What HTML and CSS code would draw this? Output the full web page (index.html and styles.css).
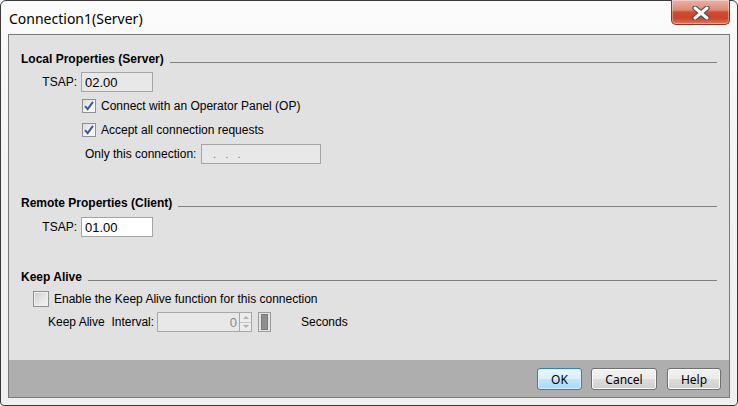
FILE: index.html
```html
<!DOCTYPE html>
<html>
<head>
<meta charset="utf-8">
<link rel="stylesheet" href="styles.css">
</head>
<body>
<div class="window">
  <div class="titlebar">
    <span class="title">Connection1(Server)</span>
    <button class="close" aria-label="Close">
      <svg width="20" height="14" viewBox="0 0 20 14">
        <path d="M4 2 L16 12 M16 2 L4 12" stroke="#4a4a4a" stroke-width="5.2" stroke-linecap="round" fill="none"/>
        <path d="M4 2 L16 12 M16 2 L4 12" stroke="#ffffff" stroke-width="3" stroke-linecap="round" fill="none"/>
      </svg>
    </button>
  </div>
  <div class="panel">
    <div class="content">
      <div class="sechead h1"><span class="sectitle">Local Properties (Server)</span><span class="rule"></span></div>
      <div class="row tsap r1"><span class="lbl">TSAP:</span><span class="field gray w72">02.00</span></div>
      <div class="row cbrow c1"><span class="cb"><svg width="14" height="14" viewBox="0 0 14 14"><path d="M3 7.2 L5.6 10.2 L11 2.8" stroke="#3c5aa0" stroke-width="2" fill="none"/></svg></span><span>Connect with an Operator Panel (OP)</span></div>
      <div class="row cbrow c2"><span class="cb"><svg width="14" height="14" viewBox="0 0 14 14"><path d="M3 7.2 L5.6 10.2 L11 2.8" stroke="#3c5aa0" stroke-width="2" fill="none"/></svg></span><span>Accept all connection requests</span></div>
      <div class="row only"><span class="onlylbl">Only this connection:</span><span class="field gray w120 dots">.&nbsp;&nbsp;&nbsp;.&nbsp;&nbsp;&nbsp;.</span></div>
      <div class="sechead h2"><span class="sectitle">Remote Properties (Client)</span><span class="rule"></span></div>
      <div class="row tsap r2"><span class="lbl">TSAP:</span><span class="field white w72">01.00</span></div>
      <div class="sechead h3"><span class="sectitle">Keep Alive</span><span class="rule"></span></div>
      <div class="row kacb"><span class="cb big"></span><span>Enable the Keep Alive function for this connection</span></div>
      <div class="row interval">
        <span class="intlbl">Keep Alive&nbsp; Interval:</span>
        <span class="spin"><span class="spinval">0</span></span>
        <span class="spinbtns">
          <span class="sb"><svg width="8" height="5" viewBox="0 0 8 5"><path d="M1 4 L4 1 L7 4 Z" fill="#b0b0b0"/></svg></span>
          <span class="sb"><svg width="8" height="5" viewBox="0 0 8 5"><path d="M1 1 L4 4 L7 1 Z" fill="#b0b0b0"/></svg></span>
        </span>
        <span class="slider"><span class="knob"></span></span>
        <span class="secs">Seconds</span>
      </div>
    </div>
    <div class="buttons">
      <button class="btn ok">OK</button>
      <button class="btn cancel">Cancel</button>
      <button class="btn help">Help</button>
    </div>
  </div>
</div>
</body>
</html>
```
FILE: styles.css
```css
html, body {
  margin: 0;
  padding: 0;
  width: 738px;
  height: 406px;
  overflow: hidden;
  background: #ffffff;
}
.window {
  position: relative;
  box-sizing: border-box;
  width: 738px;
  height: 406px;
  border: 1px solid #3a3a3a;
  border-radius: 6px 6px 4px 4px;
  background: linear-gradient(180deg, #fbfbfb 0%, #f3f3f3 40%, #f0f0f0 100%);
  display: flex;
  flex-direction: column;
  font-family: "Liberation Sans", Arial, sans-serif;
  font-size: 12px;
  color: #000;
}
.titlebar {
  height: 32px;
  display: flex;
  align-items: center;
  padding-left: 8px;
}
.title {
  font-family: "Noto Sans", "Open Sans", sans-serif;
  font-size: 14px;
  color: #000;
  margin-top: 2px;
}
.close {
  position: absolute;
  left: 670px;
  top: -1px;
  width: 59px;
  height: 25px;
  box-sizing: border-box;
  border: 1px solid #83362a;
  border-top: none;
  border-radius: 0 0 5px 5px;
  background: linear-gradient(180deg, #eab2a6 0%, #e08b78 40%, #d04a31 52%, #c9442c 75%, #d8785f 100%);
  box-shadow: inset 0 0 0 1px rgba(255,255,255,0.35);
  padding: 0;
  display: flex;
  align-items: center;
  justify-content: center;
}
.close svg { display: block; margin-top: 1px; }
.panel {
  margin-left: 7px;
  width: 722px;
  height: 364px;
  margin-top: 1px;
  box-sizing: border-box;
  border: 1px solid #7a7a7a;
  background: #e1e1e1;
  display: flex;
  flex-direction: column;
}
.content {
  flex: 1;
  display: flex;
  flex-direction: column;
}
.sechead {
  height: 16px;
  display: flex;
  align-items: center;
  padding-left: 12px;
  padding-right: 12px;
}
.sectitle {
  font-weight: bold;
  white-space: nowrap;
}
.rule {
  flex: 1;
  height: 1px;
  background: #808080;
  margin-left: 6px;
  margin-top: 7px;
}
.h1 { margin-top: 16px; }
.h2 { margin-top: 31px; }
.h3 { margin-top: 32px; }
.row {
  display: flex;
  align-items: center;
  white-space: nowrap;
}
.tsap { height: 20px; }
.r1 { margin-top: 5px; }
.r2 { margin-top: 6px; }
.lbl {
  width: 68px;
  text-align: right;
  margin-right: 4px;
}
.field {
  box-sizing: border-box;
  height: 20px;
  border: 1px solid #a5a5a5;
  padding-left: 3px;
  display: flex;
  align-items: center;
  font-size: 13px;
}
.gray { background: #e8e8e8; }
.white { background: #ffffff; }
.w72 { width: 72px; }
.w120 { width: 120px; }
.dots { color: #777; padding-left: 11px; font-size: 11px; }
.cbrow {
  height: 16px;
  padding-left: 73px;
}
.c1 { margin-top: 6px; }
.c2 { margin-top: 8px; }
.cb {
  box-sizing: border-box;
  width: 14px;
  height: 14px;
  border: 1px solid #8f8f8f;
  background: linear-gradient(135deg, #dcdcdc 0%, #f4f4f4 60%, #ffffff 100%);
  margin-right: 5px;
  display: flex;
  align-items: center;
  justify-content: center;
  flex: none;
}
.cb svg { display: block; margin: -1px; }
.only {
  height: 20px;
  margin-top: 6px;
  padding-left: 76px;
}
.onlylbl { width: 116px; }
.kacb {
  height: 16px;
  margin-top: 6px;
  padding-left: 24px;
}
.cb.big {
  width: 16px;
  height: 16px;
  border: 1px solid #8e8f8f;
  background: linear-gradient(135deg, #cbcbcb 0%, #e6e6e6 55%, #f4f4f4 100%);
  box-shadow: inset 0 0 0 1px #f0f0f0;
  margin-right: 5px;
}
.interval {
  height: 20px;
  margin-top: 5px;
  padding-left: 39px;
}
.intlbl { width: 109px; }
.spin {
  box-sizing: border-box;
  width: 82px;
  height: 20px;
  border: 1px solid #a8a8a8;
  border-right: none;
  background: #e8e8e8;
  display: flex;
  align-items: center;
  justify-content: flex-end;
  padding-right: 2px;
  color: #888;
  font-size: 13px;
}
.spinbtns {
  box-sizing: border-box;
  width: 13px;
  height: 20px;
  border: 1px solid #a8a8a8;
  display: flex;
  flex-direction: column;
  background: #ececec;
}
.sb {
  flex: 1;
  display: flex;
  align-items: center;
  justify-content: center;
  border-bottom: 1px solid #c8c8c8;
}
.sb:last-child { border-bottom: none; }
.sb svg { display: block; }
.slider {
  box-sizing: border-box;
  width: 13px;
  height: 20px;
  margin-left: 6px;
  border: 1px solid #9a9a9a;
  background: #e4e4e4;
  display: flex;
  align-items: center;
  justify-content: center;
}
.knob {
  width: 5px;
  height: 14px;
  background: #8e8e8e;
  border: 1px solid #7a7a7a;
}
.secs { margin-left: 30px; }
.buttons {
  height: 37px;
  background: #aeaeae;
  display: flex;
  align-items: center;
  justify-content: flex-end;
  padding-right: 8px;
  gap: 10px;
}
.btn {
  box-sizing: border-box;
  height: 22px;
  border: 1px solid #707070;
  border-radius: 3px;
  background: linear-gradient(180deg, #f2f2f2 0%, #ebebeb 50%, #dddddd 51%, #cfcfcf 100%);
  box-shadow: inset 0 0 0 1px #fcfcfc;
  font-family: "Noto Sans", "Open Sans", sans-serif;
  font-size: 12px;
  color: #000;
  padding: 0;
  margin-top: 1px;
}
.ok {
  width: 45px;
  border-color: #3c7fb1;
  background: linear-gradient(180deg, #eaf6fd 0%, #d9f0fc 50%, #bee6fd 51%, #a7d9f5 100%);
  box-shadow: inset 0 0 0 1px #d4f0fc;
  margin-right: -1px;
}
.cancel { width: 66px; }
.help { width: 54px; }
```
